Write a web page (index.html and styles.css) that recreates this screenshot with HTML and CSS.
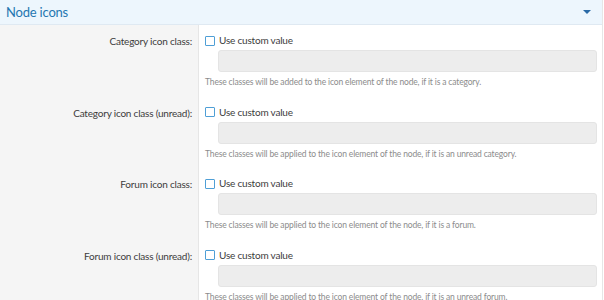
FILE: index.html
```html
<!DOCTYPE html>
<html lang="en">
<head>
    <meta charset="UTF-8">
    <title>Node icons</title>
    <link rel="stylesheet" href="styles.css">
</head>
<body>
    <div class="block">
        <h2 class="block-header">
            <span>Node icons</span>
            <span class="toggle"></span>
        </h2>

        <div class="block-body">
            <dl class="form-row">
                <dt>Category icon class:</dt>
                <dd>
                    <label class="check"><span class="box"></span>Use custom value</label>
                    <div class="input"></div>
                    <div class="explain">These classes will be added to the icon element of the node, if it is a category.</div>
                </dd>
            </dl>
            <dl class="form-row">
                <dt>Category icon class (unread):</dt>
                <dd>
                    <label class="check"><span class="box"></span>Use custom value</label>
                    <div class="input"></div>
                    <div class="explain">These classes will be applied to the icon element of the node, if it is an unread category.</div>
                </dd>
            </dl>
            <dl class="form-row">
                <dt>Forum icon class:</dt>
                <dd>
                    <label class="check"><span class="box"></span>Use custom value</label>
                    <div class="input"></div>
                    <div class="explain">These classes will be applied to the icon element of the node, if it is a forum.</div>
                </dd>
            </dl>
            <dl class="form-row">
                <dt>Forum icon class (unread):</dt>
                <dd>
                    <label class="check"><span class="box"></span>Use custom value</label>
                    <div class="input"></div>
                    <div class="explain">These classes will be applied to the icon element of the node, if it is an unread forum.</div>
                </dd>
            </dl>
        </div>
    </div>
</body>
</html>
```

FILE: styles.css
```css
/* Reset */
* {
    margin: 0;
    padding: 0;
    box-sizing: border-box;
}

body {
    font-family: Lato, 'Open Sans', sans-serif;
    color: #141414;
    background: #fff;
}

/* Block */
.block {
    border-right: 1px solid #e6e6e6;
    width: 603px;
}

.block-header {
    display: flex;
    justify-content: space-between;
    align-items: center;
    height: 25px;
    padding: 0 11px 0 6px;
    background: #edf6fd;
    border-bottom: 1px solid #dfe9f2;
    color: #2577b1;
    font-size: 13px;
    letter-spacing: -0.2px;
    font-weight: 400;
}

.toggle {
    width: 0;
    height: 0;
    border-left: 4px solid transparent;
    border-right: 4px solid transparent;
    border-top: 4px solid #2a6aa6;
    margin-top: -1px;
}

/* Rows */
.form-row {
    display: flex;
}

.form-row dt {
    width: 199px;
    flex-shrink: 0;
    background: #f5f5f5;
    border-right: 1px solid #e6e6e6;
    text-align: right;
    padding: 9px 6px 0 0;
    font-size: 10px;
    letter-spacing: -0.2px;
    line-height: 15px;
    color: #3c3c3c;
}

.form-row dd {
    flex: 1;
    padding: 8px 5px 8.6px 6px;
}

.check {
    display: flex;
    align-items: center;
    font-size: 10px;
    letter-spacing: -0.2px;
    line-height: 15px;
    color: #3c3c3c;
}

.box {
    width: 10px;
    height: 10px;
    border: 1px solid #4f9fd6;
    border-radius: 1px;
    background: #fff;
    margin-right: 4px;
}

.input {
    margin: 2px 0 0 13px;
    height: 22px;
    background: #ededed;
    border: 1px solid #e4e4e4;
    border-radius: 3px;
}

.explain {
    margin-top: 4px;
    font-size: 8.5px;
    letter-spacing: -0.15px;
    line-height: 12px;
    color: #8c8c8c;
}
```
